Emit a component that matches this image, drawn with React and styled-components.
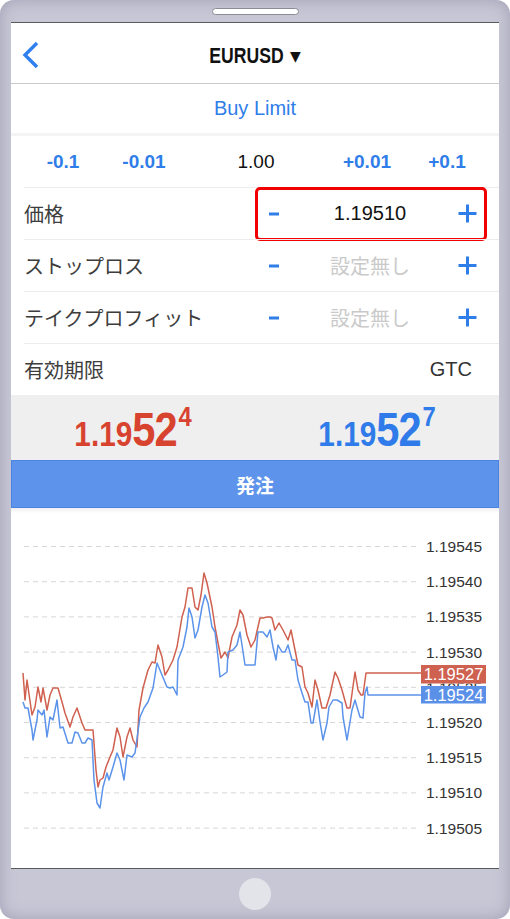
import React from "react";
import styled, { createGlobalStyle } from "styled-components";

const BLUE = "#2f7de9";
const RED = "#d8432f";

const GlobalStyle = createGlobalStyle`
  html, body { margin: 0; padding: 0; background: #fff; }
  body { font-family: "Liberation Sans", Arial, "Noto Sans CJK JP", sans-serif; }
`;

const Device = styled.div`
  width: 510px;
  height: 919px;
  box-sizing: border-box;
  border-radius: 14px;
  background: #c7c7d5;
  box-shadow: inset 0 0 16px rgba(90, 90, 125, 0.35);
  display: flex;
  flex-direction: column;
  padding: 0 11px;
`;

const TopBezel = styled.div`
  height: 22px;
  box-sizing: border-box;
  padding-top: 8px;
  display: flex;
  justify-content: center;
`;

const Speaker = styled.div`
  width: 87px;
  height: 7px;
  box-sizing: border-box;
  border: 1px solid #8c8c96;
  border-radius: 4px;
  background: #fff;
`;

const Screen = styled.div`
  height: 847px;
  box-sizing: border-box;
  border-top: 1px solid #5a5a5a;
  border-bottom: 1px solid #5a5a5a;
  background: #fff;
  display: flex;
  flex-direction: column;
  overflow: hidden;
`;

const BottomBezel = styled.div`
  flex: 1;
  display: flex;
  align-items: center;
  justify-content: center;
`;

const HomeButton = styled.div`
  width: 32px;
  height: 32px;
  border-radius: 50%;
  background: #e3e3ea;
`;

const Header = styled.div`
  height: 61px;
  box-sizing: border-box;
  border-bottom: 1px solid #cacaca;
  display: grid;
  grid-template-columns: 1fr auto 1fr;
  align-items: center;
`;

const BackButton = styled.div`
  padding-left: 11px;
  padding-top: 4px;
  display: flex;
`;

const Title = styled.div`
  font-weight: bold;
  font-size: 22px;
  color: #111;
  padding-top: 5px;
  display: flex;
  align-items: center;
  gap: 6px;
`;

const Condensed = styled.span`
  display: inline-block;
  transform: scaleX(0.8);
  margin: 0 -9px;
`;

const Caret = styled.span`
  font-family: "DejaVu Sans", sans-serif;
  font-size: 14px;
`;

const OrderType = styled.div`
  height: 52px;
  box-sizing: border-box;
  border-bottom: 3px solid #f4f4f4;
  display: flex;
  align-items: center;
  justify-content: center;
  color: ${BLUE};
  font-size: 20px;
`;

const LotRow = styled.div`
  height: 51px;
  box-sizing: border-box;
  padding-top: 1px;
  display: grid;
  grid-template-columns: 104px 58px 166px 56px 104px;
  align-items: center;
  justify-items: center;
  font-size: 19px;
`;

const LotStep = styled.span`
  color: ${BLUE};
  font-weight: bold;
`;

const LotValue = styled.span`
  color: #111;
`;

const Divider = styled.div`
  height: 1px;
  margin-left: 13px;
  background: #ececec;
`;

const FormRow = styled.div`
  height: 51px;
  padding: 0 12px 0 13px;
  display: flex;
  align-items: center;
  justify-content: space-between;
`;

const Label = styled.span`
  font-family: "Noto Sans CJK JP", sans-serif;
  font-size: 20px;
  color: #3d3d3d;
`;

const Stepper = styled.div`
  width: 232px;
  height: 54px;
  flex-shrink: 0;
  box-sizing: border-box;
  border: 3px solid ${(p) => (p.$highlight ? "#f00000" : "transparent")};
  border-radius: 5px;
  display: grid;
  grid-template-columns: 32px 1fr 34px;
  align-items: center;
  justify-items: center;
`;

const StepValue = styled.span`
  font-family: ${(p) =>
    p.$empty ? '"Noto Sans CJK JP", sans-serif' : '"Liberation Sans", sans-serif'};
  font-size: 20px;
  color: ${(p) => (p.$empty ? "#cacaca" : "#111")};
`;

const Expiry = styled.span`
  font-size: 20px;
  color: #333;
  margin-right: 15px;
`;

const QuotePanel = styled.div`
  height: 65px;
  background: #efefef;
  display: grid;
  grid-template-columns: 1fr 1fr;
  align-items: center;
  justify-items: center;
`;

const Quote = styled.div`
  display: flex;
  align-items: baseline;
  color: ${(p) => p.$color};
  font-weight: bold;
  line-height: 1;
  padding-top: 3px;
  transform: scaleX(0.85);
`;

const QuoteSmall = styled.span`
  font-size: 35px;
`;

const QuoteBig = styled.span`
  font-size: 49px;
  letter-spacing: -1px;
`;

const QuoteSup = styled.span`
  font-size: 28px;
  align-self: flex-start;
  margin-top: -2px;
  margin-left: 2px;
`;

const OrderButton = styled.div`
  height: 48px;
  box-sizing: border-box;
  background: #5d93ea;
  border: 1px solid #4a84e2;
  display: flex;
  align-items: center;
  justify-content: center;
  color: #fff;
  font-family: "Noto Sans CJK JP", sans-serif;
  font-weight: bold;
  font-size: 19px;
`;

const ChartArea = styled.div`
  flex: 1;
  box-shadow: inset 0 4px 4px -2px rgba(0, 0, 0, 0.08);
`;

const Chevron = () => (
  <svg width="18" height="28" viewBox="0 0 18 28">
    <polyline points="15,2 3,14 15,26" fill="none" stroke="#2f7ff0" strokeWidth="3.4" />
  </svg>
);

const MinusIcon = () => (
  <svg width="12" height="4" viewBox="0 0 12 4">
    <rect x="1" y="0.5" width="10" height="3" fill={BLUE} />
  </svg>
);

const PlusIcon = () => (
  <svg width="19" height="19" viewBox="0 0 19 19">
    <rect x="0.5" y="8" width="18" height="3" fill={BLUE} />
    <rect x="8" y="0.5" width="3" height="18" fill={BLUE} />
  </svg>
);

const askPts = [[23,673],[25,700],[27,680],[32,715],[35,707],[38,687],[41,702],[43,688],[47,710],[50,695],[53,688],[58,688],[62,702],[65,713],[70,727],[73,717],[77,708],[82,723],[85,730],[93,730],[96,770],[98,787],[100,780],[103,778],[106,767],[110,757],[113,750],[117,728],[120,737],[123,757],[127,737],[130,728],[133,740],[137,747],[139,710],[143,688],[148,670],[152,662],[155,663],[158,645],[162,657],[165,675],[168,670],[173,660],[177,647],[182,617],[185,607],[188,588],[192,588],[195,607],[198,610],[201,595],[204,573],[207,583],[212,607],[215,627],[218,643],[221,658],[225,652],[228,658],[232,637],[237,625],[240,610],[243,615],[247,635],[251,647],[255,640],[260,618],[263,618],[267,617],[270,617],[272,618],[275,630],[279,623],[283,630],[288,640],[291,630],[295,650],[298,665],[302,667],[305,687],[308,693],[312,707],[315,680],[318,690],[322,708],[326,708],[330,695],[335,672],[338,678],[342,690],[347,708],[350,708],[355,672],[358,690],[361,695],[363,695],[366,673],[421,673]];

const bidPts = [[23,702],[25,708],[28,708],[32,730],[33,740],[37,720],[38,710],[42,715],[44,710],[47,737],[50,717],[53,720],[57,700],[60,728],[63,727],[68,743],[72,743],[75,732],[78,733],[82,743],[85,743],[88,738],[92,740],[94,780],[97,803],[100,808],[103,787],[107,773],[109,780],[113,767],[117,753],[120,760],[124,780],[127,755],[132,757],[135,753],[140,717],[144,708],[148,702],[153,688],[157,663],[162,675],[167,687],[170,688],[173,687],[177,695],[178,660],[183,647],[187,627],[189,608],[192,617],[195,638],[198,630],[202,607],[205,595],[208,603],[212,627],[215,632],[218,657],[220,677],[223,675],[227,672],[228,652],[233,650],[237,645],[240,632],[245,665],[248,665],[255,665],[258,632],[263,632],[267,637],[270,630],[273,647],[276,660],[278,645],[282,652],[285,652],[288,645],[292,660],[295,660],[298,680],[302,693],[305,702],[308,702],[311,723],[313,723],[317,700],[320,722],[323,740],[327,723],[329,707],[333,700],[337,700],[342,703],[343,717],[347,740],[352,710],[355,700],[357,707],[360,717],[363,718],[365,693],[367,687],[368,695],[421,695]];

const levels = ["1.19545", "1.19540", "1.19535", "1.19530", "1.19525", "1.19520", "1.19515", "1.19510", "1.19505"];

function PriceChart() {
  return (
    <svg width="488" height="359" viewBox="11 508 488 359" style={{ display: "block" }}>
      <defs>
        <clipPath id="tagGap">
          <rect x="421" y="683.5" width="65" height="2.5" />
        </clipPath>
      </defs>
      {levels.map((lv, i) => {
        const y = 546.5 + i * 35.2;
        const hidden = lv === "1.19525";
        return (
          <g key={lv}>
            <line x1="24" x2="418" y1={y} y2={y} stroke="#d6d6d6" strokeWidth="1" strokeDasharray="5 4" />
            <text
              x="426"
              y={y + 5.5}
              fontSize="15.5"
              fill="#333"
              fontFamily="Liberation Sans, sans-serif"
              clipPath={hidden ? "url(#tagGap)" : undefined}
            >
              {lv}
            </text>
          </g>
        );
      })}
      <polyline points={askPts.map((p) => p.join(",")).join(" ")} fill="none" stroke="#d0604f" strokeWidth="1.5" strokeLinejoin="round" />
      <polyline points={bidPts.map((p) => p.join(",")).join(" ")} fill="none" stroke="#5b93ea" strokeWidth="1.5" strokeLinejoin="round" />
      <rect x="421" y="665" width="65" height="18.5" fill="#cf6150" />
      <text x="453.5" y="680" fontSize="16.5" fill="#fff" textAnchor="middle" fontFamily="Liberation Sans, sans-serif">1.19527</text>
      <rect x="421" y="686" width="65" height="17.5" fill="#5b90e8" />
      <text x="453.5" y="700.5" fontSize="16.5" fill="#fff" textAnchor="middle" fontFamily="Liberation Sans, sans-serif">1.19524</text>
    </svg>
  );
}

function StepRow({ label, value, empty, highlight }) {
  return (
    <FormRow>
      <Label>{label}</Label>
      <Stepper $highlight={highlight}>
        <MinusIcon />
        <StepValue $empty={empty}>{value}</StepValue>
        <PlusIcon />
      </Stepper>
    </FormRow>
  );
}

export default function App() {
  return (
    <>
      <GlobalStyle />
      <Device>
        <TopBezel>
          <Speaker />
        </TopBezel>
        <Screen>
          <Header>
            <BackButton>
              <Chevron />
            </BackButton>
            <Title>
              <Condensed>EURUSD</Condensed>
              <Caret>▼</Caret>
            </Title>
            <div />
          </Header>
          <OrderType>Buy Limit</OrderType>
          <LotRow>
            <LotStep>-0.1</LotStep>
            <LotStep>-0.01</LotStep>
            <LotValue>1.00</LotValue>
            <LotStep>+0.01</LotStep>
            <LotStep>+0.1</LotStep>
          </LotRow>
          <Divider />
          <StepRow label="価格" value="1.19510" highlight />
          <Divider />
          <StepRow label="ストップロス" value="設定無し" empty />
          <Divider />
          <StepRow label="テイクプロフィット" value="設定無し" empty />
          <Divider />
          <FormRow>
            <Label>有効期限</Label>
            <Expiry>GTC</Expiry>
          </FormRow>
          <QuotePanel>
            <Quote $color={RED}>
              <QuoteSmall>1.19</QuoteSmall>
              <QuoteBig>52</QuoteBig>
              <QuoteSup>4</QuoteSup>
            </Quote>
            <Quote $color="#2f7be9">
              <QuoteSmall>1.19</QuoteSmall>
              <QuoteBig>52</QuoteBig>
              <QuoteSup>7</QuoteSup>
            </Quote>
          </QuotePanel>
          <OrderButton>発注</OrderButton>
          <ChartArea>
            <PriceChart />
          </ChartArea>
        </Screen>
        <BottomBezel>
          <HomeButton />
        </BottomBezel>
      </Device>
    </>
  );
}
